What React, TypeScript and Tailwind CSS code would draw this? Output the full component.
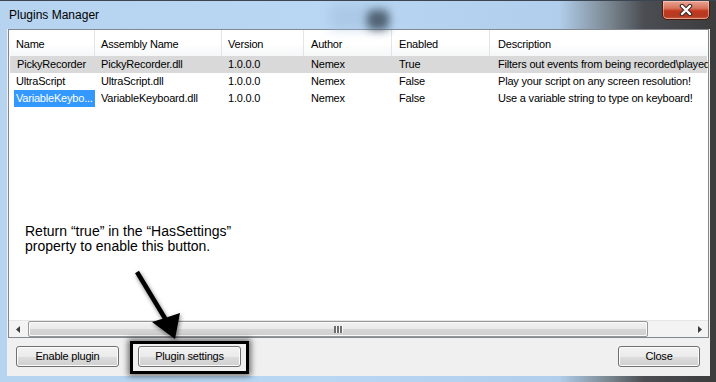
const columns = [
  { title: 'Name', w: 'w-[86px]', pl: 'pl-[7px]' },
  { title: 'Assembly Name', w: 'w-[127px]', pl: 'pl-[6px]' },
  { title: 'Version', w: 'w-[82px]', pl: 'pl-[6px]' },
  { title: 'Author', w: 'w-[88px]', pl: 'pl-[7px]' },
  { title: 'Enabled', w: 'w-[98px]', pl: 'pl-[7px]' },
  { title: 'Description', w: 'w-[280px]', pl: 'pl-[8px]' },
]

const plugins = [
  {
    name: 'PickyRecorder',
    assembly: 'PickyRecorder.dll',
    version: '1.0.0.0',
    author: 'Nemex',
    enabled: 'True',
    description: 'Filters out events from being recorded\\played',
  },
  {
    name: 'UltraScript',
    assembly: 'UltraScript.dll',
    version: '1.0.0.0',
    author: 'Nemex',
    enabled: 'False',
    description: 'Play your script on any screen resolution!',
  },
  {
    name: 'VariableKeybo...',
    assembly: 'VariableKeyboard.dll',
    version: '1.0.0.0',
    author: 'Nemex',
    enabled: 'False',
    description: 'Use a variable string to type on keyboard!',
  },
]

function WinButton({ label, className }: { label: string; className: string }) {
  return (
    <button
      className={`h-[21px] rounded-[3px] border border-[#707070] text-[11px] tracking-[-0.2px] text-black
        bg-[linear-gradient(to_bottom,#f2f2f2_0%,#ebebeb_50%,#dddddd_51%,#cfcfcf_100%)]
        shadow-[inset_0_0_0_1px_#fcfcfc] flex items-center justify-center ${className}`}
    >
      {label}
    </button>
  )
}

export default function App() {
  return (
    <div
      className="relative w-[716px] h-[382px] overflow-hidden flex flex-col border-t border-[#3b4652]
        font-['Liberation_Sans',Arial,sans-serif]
        bg-[linear-gradient(to_right,#b6d3ef_0%,#b9d7f3_45%,#b1cfec_78%,#7b8791_85%,#4a4d52_90%,#3c3c3c_100%)]"
    >
      {/* title bar */}
      <div className="relative h-[28px] pl-[9px] pt-[7px] text-[12px] leading-[14px] text-black">
        <div className="absolute left-[330px] top-[4px] w-[60px] h-[24px] bg-[#a3c1df] blur-[6px] opacity-60" />
        <div className="absolute left-[367px] top-[9px] w-[22px] h-[20px] rounded-[6px] bg-[#34414e] blur-[4px] opacity-75" />
        <span className="relative">Plugins Manager</span>
        <div
          className="absolute left-[662px] top-[-1px] w-[48px] h-[20px] rounded-b-[5px] border border-[#4a1a10]
            bg-[linear-gradient(to_bottom,#e9a493_0%,#d8745d_40%,#c2381f_55%,#b23a22_85%,#d0674c_100%)]
            shadow-[inset_0_0_0_1px_rgba(255,220,210,0.5)] flex items-center justify-center"
        >
          <svg width="16" height="12" viewBox="0 0 16 12">
            <path d="M4 2 L12 10 M12 2 L4 10" stroke="#3d2a28" strokeWidth="4.5" strokeLinecap="round" />
            <path d="M4 2 L12 10 M12 2 L4 10" stroke="#ffffff" strokeWidth="2.4" strokeLinecap="round" />
          </svg>
        </div>
      </div>

      {/* client area */}
      <div className="flex-1 ml-[7px] mr-[6px] mb-[6px] bg-[#f0f0f0] flex flex-col">
        {/* list view */}
        <div className="h-[309px] mx-[1px] border border-[#828790] bg-white flex flex-col overflow-hidden text-[11px] tracking-[-0.2px] text-black">
          <div className="h-[26px] flex shrink-0 bg-[linear-gradient(to_bottom,#ffffff_0%,#ffffff_50%,#f6f7f8_100%)]">
            {columns.map((c) => (
              <div
                key={c.title}
                className={`${c.w} ${c.pl} shrink-0 flex items-center pt-[2px] border-r border-[#e3e4e6] whitespace-nowrap`}
              >
                {c.title}
              </div>
            ))}
          </div>

          {plugins.map((p, i) => (
            <div
              key={p.name}
              className={`h-[17px] flex shrink-0 items-center whitespace-nowrap ${i === 0 ? 'bg-[#d9d9d9] mx-[1px]' : ''}`}
            >
              <div className={`${i === 0 ? 'w-[85px]' : 'w-[86px]'} shrink-0 flex h-full items-center pl-[5px]`}>
                <span
                  className={`h-full flex-1 flex items-center pl-[2px] ${i === 2 ? 'bg-[#3399ff] text-white' : ''}`}
                >
                  {p.name}
                </span>
              </div>
              <div className="w-[127px] shrink-0 pl-[6px]">{p.assembly}</div>
              <div className="w-[82px] shrink-0 pl-[6px]">{p.version}</div>
              <div className="w-[88px] shrink-0 pl-[7px]">{p.author}</div>
              <div className="w-[98px] shrink-0 pl-[7px]">{p.enabled}</div>
              <div className="w-[280px] shrink-0 pl-[8px]">{p.description}</div>
            </div>
          ))}

          <div className="flex-1" />

          {/* horizontal scrollbar */}
          <div className="h-[17px] shrink-0 flex bg-[#f3f3f3] border-t border-[#e6e6e6]">
            <div className="w-[17px] flex items-center justify-center">
              <svg width="4" height="7" viewBox="0 0 4 7">
                <path d="M4 0 L0 3.5 L4 7 Z" fill="#3c3c3c" />
              </svg>
            </div>
            <div
              className="ml-[2px] w-[620px] rounded-[2px] border border-[#979797] flex items-center justify-center
                bg-[linear-gradient(to_bottom,#f2f2f2_0%,#e9e9e9_50%,#d6d6d6_51%,#cfcfcf_100%)]
                shadow-[inset_0_0_0_1px_#fafafa]"
            >
              <div className="flex gap-[1px]">
                <span className="w-[2px] h-[7px] bg-[#6e6e6e] shadow-[1px_0_0_#f8f8f8]" />
                <span className="w-[2px] h-[7px] bg-[#6e6e6e] shadow-[1px_0_0_#f8f8f8]" />
                <span className="w-[2px] h-[7px] bg-[#6e6e6e] shadow-[1px_0_0_#f8f8f8]" />
              </div>
            </div>
            <div className="flex-1" />
            <div className="w-[17px] flex items-center justify-center">
              <svg width="4" height="7" viewBox="0 0 4 7">
                <path d="M0 0 L4 3.5 L0 7 Z" fill="#3c3c3c" />
              </svg>
            </div>
          </div>
        </div>

        {/* buttons */}
        <div className="flex pt-[8px] pl-[9px] pr-[10px]">
          <WinButton label="Enable plugin" className="w-[103px]" />
          <WinButton label="Plugin settings" className="ml-[19px] w-[103px]" />
          <div className="flex-1" />
          <WinButton label="Close" className="w-[82px]" />
        </div>
      </div>

      {/* annotation */}
      <div className="absolute left-[25px] top-[223px] text-[14px] leading-[15px] text-black">
        <p>Return “true” in the “HasSettings”</p>
        <p>property to enable this button.</p>
      </div>
      <div className="absolute left-[130px] top-[340px] w-[119px] h-[33px] border-[3px] border-black shadow-[0_0_6px_2px_rgba(0,0,0,0.55)]" />
      <svg
        className="absolute left-0 top-0 pointer-events-none drop-shadow-[1px_2px_2px_rgba(0,0,0,0.5)]"
        width="716"
        height="382"
        viewBox="0 0 716 382"
      >
        <path d="M137 271 L166 319" stroke="#000" strokeWidth="4.5" strokeLinecap="butt" />
        <path d="M175 338 L152 321 L165 317 L180 312 Z" fill="#000" />
      </svg>
    </div>
  )
}
